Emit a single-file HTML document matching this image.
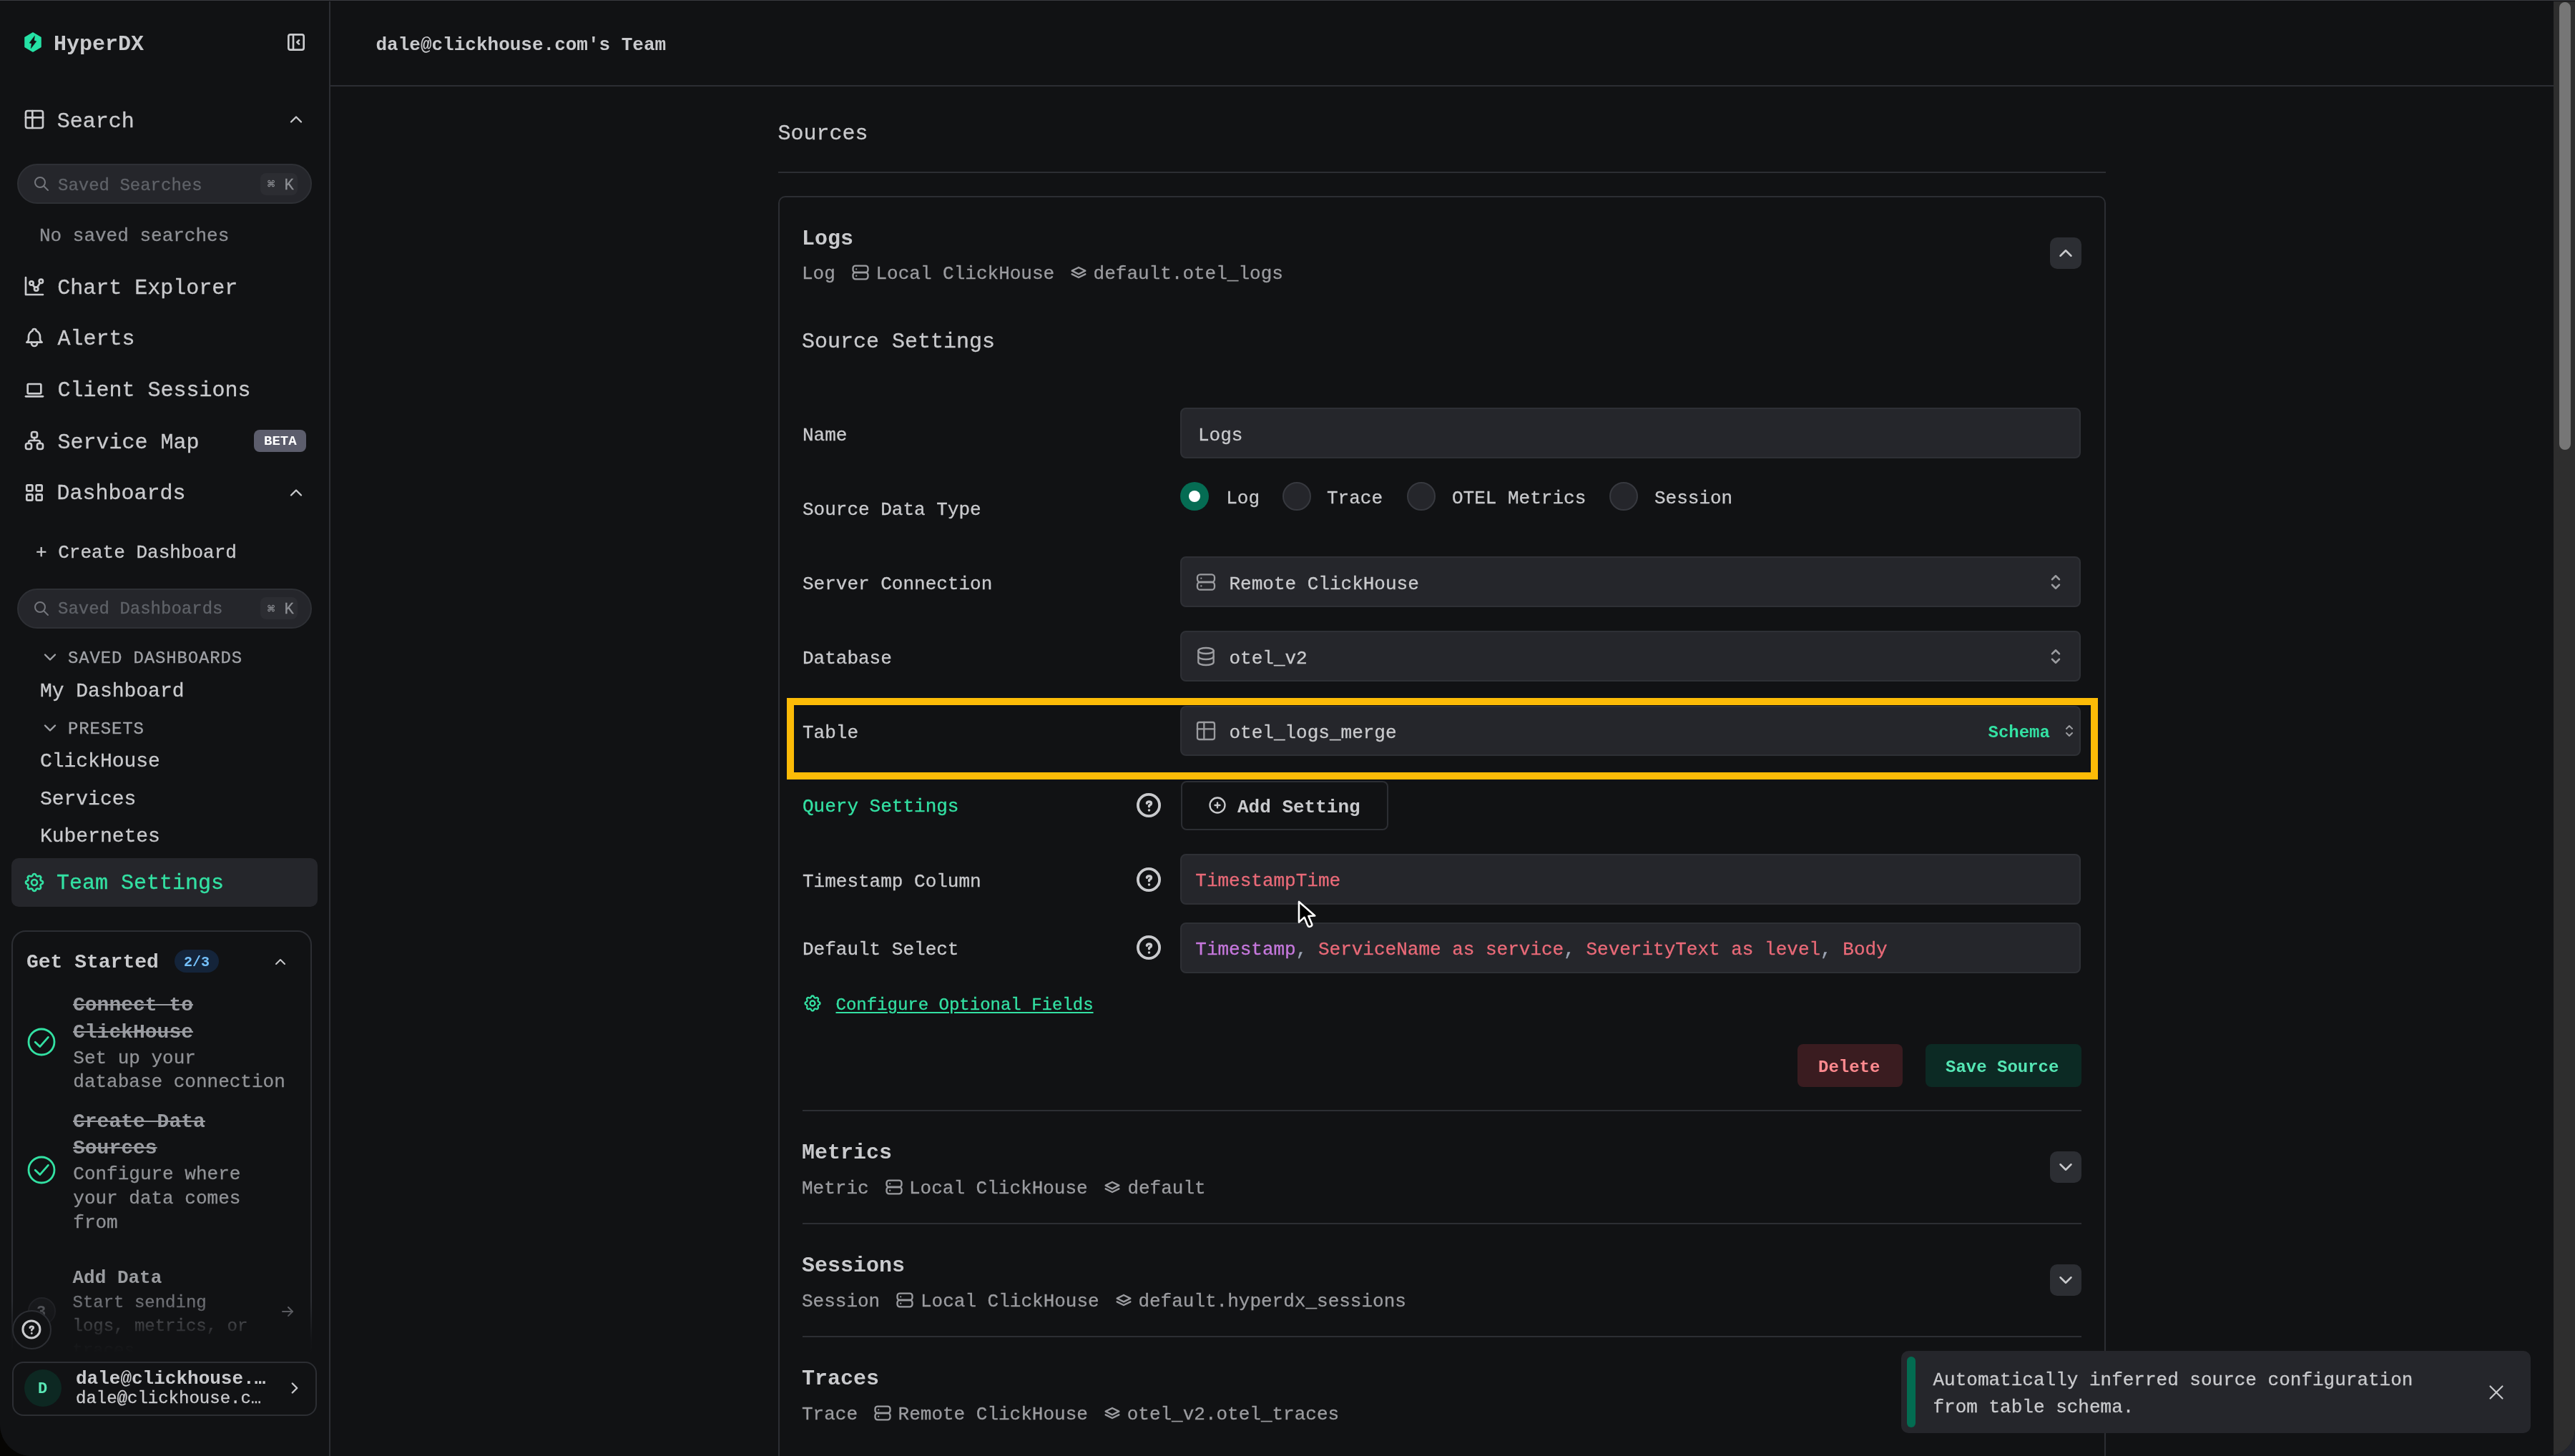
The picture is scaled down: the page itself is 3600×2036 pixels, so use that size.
<!DOCTYPE html><html><head><meta charset="utf-8"><style>
html,body{margin:0;padding:0;}
body{width:3600px;height:2036px;overflow:hidden;background:linear-gradient(to right,#060503 0%,#0a0a0a 50%,#23262f 100%);position:relative;font-family:"Liberation Mono",monospace;}
#w{position:absolute;left:0;top:0;width:3600px;height:2036px;will-change:transform;background:#111214;border-radius:0 0 38px 44px;overflow:hidden;}
.t{position:absolute;white-space:pre;line-height:1;-webkit-font-smoothing:antialiased;}
.r{position:absolute;box-sizing:border-box;}
.i{position:absolute;fill:none;stroke:currentColor;stroke-linecap:round;stroke-linejoin:round;}
</style></head><body><div id="w">
<div class="r" style="left:0.0px;top:0.0px;width:3600.0px;height:1.0px;background:#3a3b40"></div>
<div class="r" style="left:460.0px;top:2.0px;width:2.0px;height:2034.0px;background:#2c2e33"></div>
<div class="r" style="left:462.0px;top:119.0px;width:3108.0px;height:2.0px;background:#2c2e33"></div>
<div class="r" style="left:3570.0px;top:2.0px;width:30.0px;height:2034.0px;background:#2e2e2e"></div>
<div class="r" style="left:3578.0px;top:3.0px;width:16.0px;height:626.0px;background:#767676;border-radius:8px"></div>
<svg class="r" style="left:34px;top:45px;width:24px;height:28px" viewBox="0 0 24 28"><path d="M12 1 L23 7.5 L23 20.5 L12 27 L1 20.5 L1 7.5 Z" fill="#25e2a5" stroke="#25e2a5" stroke-width="1.5" stroke-linejoin="round"/><path d="M14.6 4.9 L7.0 15.1 L10.1 15.9 L9.1 22.9 L17.0 12.8 L13.8 11.7 Z" fill="#111214" stroke="#111214" stroke-width="0.3" stroke-linejoin="round"/></svg>
<div class="t" style="left:75.0px;top:46.8px;font-size:30px;color:#c9cacd;font-weight:700;">HyperDX</div>
<svg class="i" style="left:398.0px;top:43.0px;width:32px;height:32px;color:#c9cacd" viewBox="0 0 24 24" stroke-width="2"><path d="M4 4m0 2a2 2 0 0 1 2 -2h12a2 2 0 0 1 2 2v12a2 2 0 0 1 -2 2h-12a2 2 0 0 1 -2 -2z"/><path d="M9 4v16"/><path d="M15 10l-2 2l2 2"/></svg>
<svg class="i" style="left:32.0px;top:151.0px;width:32px;height:32px;color:#c9cacd" viewBox="0 0 24 24" stroke-width="2"><path d="M3 5a2 2 0 0 1 2 -2h14a2 2 0 0 1 2 2v14a2 2 0 0 1 -2 2h-14a2 2 0 0 1 -2 -2v-14z"/><path d="M3 10h18"/><path d="M10 3v18"/></svg>
<div class="t" style="left:79.8px;top:154.7px;font-size:30px;color:#c9cacd;-webkit-text-stroke:0.3px currentColor;">Search</div>
<svg class="i" style="left:400.2px;top:153.0px;width:28px;height:28px;color:#c9cacd" viewBox="0 0 24 24" stroke-width="2"><path d="M6 15l6 -6l6 6"/></svg>
<div class="r" style="left:24.0px;top:229.0px;width:412.0px;height:56.0px;background:#25262b;border:2px solid #2e3035;border-radius:28px"></div>
<svg class="i" style="left:46.0px;top:245.0px;width:24px;height:24px;color:#74767c" viewBox="0 0 24 24" stroke-width="2"><path d="M10 10m-7 0a7 7 0 1 0 14 0a7 7 0 1 0 -14 0"/><path d="M21 21l-6 -6"/></svg>
<div class="t" style="left:81.0px;top:247.7px;font-size:24px;color:#5f6268;-webkit-text-stroke:0.3px currentColor;">Saved Searches</div>
<div class="r" style="left:364.0px;top:242.0px;width:51.7px;height:31.2px;background:#2c2d32;border-radius:8px"></div>
<div class="t" style="left:374.0px;top:250.0px;font-size:17px;color:#8d8f94;font-weight:700;">⌘</div>
<div class="t" style="left:397.5px;top:248.6px;font-size:22px;color:#8d8f94;-webkit-text-stroke:0.3px currentColor;">K</div>
<div class="t" style="left:55.0px;top:317.1px;font-size:26px;color:#8d8f94;-webkit-text-stroke:0.3px currentColor;">No saved searches</div>
<svg class="i" style="left:32.0px;top:384.0px;width:32px;height:32px;color:#c9cacd" viewBox="0 0 24 24" stroke-width="2"><path d="M3 3v18h18"/><path d="M9 9m-2 0a2 2 0 1 0 4 0a2 2 0 1 0 -4 0"/><path d="M19 7m-2 0a2 2 0 1 0 4 0a2 2 0 1 0 -4 0"/><path d="M14 15m-2 0a2 2 0 1 0 4 0a2 2 0 1 0 -4 0"/><path d="M10.16 10.62l2.34 2.88"/><path d="M15.088 13.328l2.837 -4.586"/></svg>
<div class="t" style="left:80.3px;top:388.1px;font-size:30px;color:#c9cacd;-webkit-text-stroke:0.3px currentColor;">Chart Explorer</div>
<svg class="i" style="left:32.0px;top:456.0px;width:32px;height:32px;color:#c9cacd" viewBox="0 0 24 24" stroke-width="2"><path d="M10 5a2 2 0 1 1 4 0a7 7 0 0 1 4 6v3a4 4 0 0 0 2 3h-16a4 4 0 0 0 2 -3v-3a7 7 0 0 1 4 -6"/><path d="M9 17v1a3 3 0 0 0 6 0v-1"/></svg>
<div class="t" style="left:80.5px;top:458.6px;font-size:30px;color:#c9cacd;-webkit-text-stroke:0.3px currentColor;">Alerts</div>
<svg class="i" style="left:32.0px;top:529.0px;width:32px;height:32px;color:#c9cacd" viewBox="0 0 24 24" stroke-width="2"><path d="M3 19l18 0"/><path d="M5 6m0 1a1 1 0 0 1 1 -1h12a1 1 0 0 1 1 1v8a1 1 0 0 1 -1 1h-12a1 1 0 0 1 -1 -1z"/></svg>
<div class="t" style="left:80.5px;top:531.2px;font-size:30px;color:#c9cacd;-webkit-text-stroke:0.3px currentColor;">Client Sessions</div>
<svg class="i" style="left:32.0px;top:600.0px;width:32px;height:32px;color:#c9cacd" viewBox="0 0 24 24" stroke-width="2"><path d="M3 15m0 2a2 2 0 0 1 2 -2h2a2 2 0 0 1 2 2v2a2 2 0 0 1 -2 2h-2a2 2 0 0 1 -2 -2z"/><path d="M15 15m0 2a2 2 0 0 1 2 -2h2a2 2 0 0 1 2 2v2a2 2 0 0 1 -2 2h-2a2 2 0 0 1 -2 -2z"/><path d="M9 3m0 2a2 2 0 0 1 2 -2h2a2 2 0 0 1 2 2v2a2 2 0 0 1 -2 2h-2a2 2 0 0 1 -2 -2z"/><path d="M6 15v-1a2 2 0 0 1 2 -2h8a2 2 0 0 1 2 2v1"/><path d="M12 9l0 3"/></svg>
<div class="t" style="left:80.5px;top:603.8px;font-size:30px;color:#c9cacd;-webkit-text-stroke:0.3px currentColor;">Service Map</div>
<div class="r" style="left:355.0px;top:600.5px;width:73.0px;height:31.5px;background:#5c5d6c;border-radius:8px"></div>
<div class="t" style="left:369.0px;top:608.4px;font-size:19px;color:#ffffff;font-weight:700;">BETA</div>
<svg class="i" style="left:32.0px;top:672.5px;width:32px;height:32px;color:#c9cacd" viewBox="0 0 24 24" stroke-width="2"><path d="M4 4m0 1a1 1 0 0 1 1 -1h4a1 1 0 0 1 1 1v4a1 1 0 0 1 -1 1h-4a1 1 0 0 1 -1 -1z"/><path d="M14 4m0 1a1 1 0 0 1 1 -1h4a1 1 0 0 1 1 1v4a1 1 0 0 1 -1 1h-4a1 1 0 0 1 -1 -1z"/><path d="M4 14m0 1a1 1 0 0 1 1 -1h4a1 1 0 0 1 1 1v4a1 1 0 0 1 -1 1h-4a1 1 0 0 1 -1 -1z"/><path d="M14 14m0 1a1 1 0 0 1 1 -1h4a1 1 0 0 1 1 1v4a1 1 0 0 1 -1 1h-4a1 1 0 0 1 -1 -1z"/></svg>
<div class="t" style="left:79.5px;top:674.9px;font-size:30px;color:#c9cacd;-webkit-text-stroke:0.3px currentColor;">Dashboards</div>
<svg class="i" style="left:400.2px;top:674.8px;width:28px;height:28px;color:#c9cacd" viewBox="0 0 24 24" stroke-width="2"><path d="M6 15l6 -6l6 6"/></svg>
<div class="t" style="left:50.0px;top:760.2px;font-size:26px;color:#c9cacd;-webkit-text-stroke:0.3px currentColor;">+ Create Dashboard</div>
<div class="r" style="left:24.0px;top:822.5px;width:412.0px;height:56.0px;background:#25262b;border:2px solid #2e3035;border-radius:28px"></div>
<svg class="i" style="left:46.0px;top:838.5px;width:24px;height:24px;color:#74767c" viewBox="0 0 24 24" stroke-width="2"><path d="M10 10m-7 0a7 7 0 1 0 14 0a7 7 0 1 0 -14 0"/><path d="M21 21l-6 -6"/></svg>
<div class="t" style="left:81.0px;top:840.3px;font-size:24px;color:#5f6268;-webkit-text-stroke:0.3px currentColor;">Saved Dashboards</div>
<div class="r" style="left:364.0px;top:835.0px;width:51.7px;height:31.0px;background:#2c2d32;border-radius:8px"></div>
<div class="t" style="left:374.0px;top:843.5px;font-size:17px;color:#8d8f94;font-weight:700;">⌘</div>
<div class="t" style="left:397.5px;top:842.1px;font-size:22px;color:#8d8f94;-webkit-text-stroke:0.3px currentColor;">K</div>
<svg class="i" style="left:56.0px;top:905.0px;width:28px;height:28px;color:#a1a3a8" viewBox="0 0 24 24" stroke-width="2"><path d="M6 9l6 6l6 -6"/></svg>
<div class="t" style="left:95.0px;top:908.9px;font-size:24px;color:#a1a3a8;-webkit-text-stroke:0.3px currentColor;letter-spacing:0.85px;">SAVED DASHBOARDS</div>
<div class="t" style="left:55.9px;top:952.8px;font-size:28px;color:#c9cacd;-webkit-text-stroke:0.3px currentColor;">My Dashboard</div>
<svg class="i" style="left:56.0px;top:1003.6px;width:28px;height:28px;color:#a1a3a8" viewBox="0 0 24 24" stroke-width="2"><path d="M6 9l6 6l6 -6"/></svg>
<div class="t" style="left:95.0px;top:1007.8px;font-size:24px;color:#a1a3a8;-webkit-text-stroke:0.3px currentColor;letter-spacing:0.85px;">PRESETS</div>
<div class="t" style="left:55.9px;top:1050.8px;font-size:28px;color:#c9cacd;-webkit-text-stroke:0.3px currentColor;">ClickHouse</div>
<div class="t" style="left:55.9px;top:1103.6px;font-size:28px;color:#c9cacd;-webkit-text-stroke:0.3px currentColor;">Services</div>
<div class="t" style="left:55.9px;top:1155.9px;font-size:28px;color:#c9cacd;-webkit-text-stroke:0.3px currentColor;">Kubernetes</div>
<div class="r" style="left:16.0px;top:1200.0px;width:428.0px;height:68.0px;background:#25262b;border-radius:10px"></div>
<svg class="i" style="left:32.0px;top:1218.0px;width:32px;height:32px;color:#33e1a3" viewBox="0 0 24 24" stroke-width="2"><path d="M10.325 4.317c.426 -1.756 2.924 -1.756 3.35 0a1.724 1.724 0 0 0 2.573 1.066c1.543 -.94 3.31 .826 2.37 2.37a1.724 1.724 0 0 0 1.065 2.572c1.756 .426 1.756 2.924 0 3.35a1.724 1.724 0 0 0 -1.066 2.573c.94 1.543 -.826 3.31 -2.37 2.37a1.724 1.724 0 0 0 -2.572 1.065c-.426 1.756 -2.924 1.756 -3.35 0a1.724 1.724 0 0 0 -2.573 -1.066c-1.543 .94 -3.31 -.826 -2.37 -2.37a1.724 1.724 0 0 0 -1.065 -2.572c-1.756 -.426 -1.756 -2.924 0 -3.35a1.724 1.724 0 0 0 1.066 -2.573c-.94 -1.543 .826 -3.31 2.37 -2.37c1 .608 2.296 .07 2.572 -1.065z"/><path d="M9 12a3 3 0 1 0 6 0a3 3 0 0 0 -6 0"/></svg>
<div class="t" style="left:79.0px;top:1220.2px;font-size:30px;color:#33e1a3;-webkit-text-stroke:0.3px currentColor;">Team Settings</div>
<div class="r" style="left:0;top:1290px;width:460px;height:600px;overflow:hidden;">
<div class="r" style="left:16.3px;top:10.5px;width:419.7px;height:789.5px;border:2px solid #2c2e33;border-radius:20px"></div>
</div>
<div class="t" style="left:37.0px;top:1331.9px;font-size:28px;color:#c9cacd;font-weight:700;">Get Started</div>
<div class="r" style="left:244.0px;top:1328.0px;width:61.5px;height:31.5px;background:#14243a;border-radius:16px"></div>
<div class="t" style="left:257.0px;top:1336.2px;font-size:20px;color:#74c0fc;font-weight:700;">2/3</div>
<svg class="i" style="left:380.0px;top:1332.6px;width:24px;height:24px;color:#c9cacd" viewBox="0 0 24 24" stroke-width="2"><path d="M6 15l6 -6l6 6"/></svg>
<svg class="i" style="left:34.0px;top:1433.0px;width:48px;height:48px;color:#33e1a3" viewBox="0 0 24 24" stroke-width="1.4"><path d="M12 12m-9 0a9 9 0 1 0 18 0a9 9 0 1 0 -18 0"/><path d="M7.6 12.1l3.3 3.2l5.8 -6.6"/></svg>
<div class="t" style="left:102.0px;top:1392.4px;font-size:28px;color:#9a9ca1;font-weight:700;text-decoration:line-through;">Connect to</div>
<div class="t" style="left:102.0px;top:1430.1px;font-size:28px;color:#9a9ca1;font-weight:700;text-decoration:line-through;">ClickHouse</div>
<div class="t" style="left:102.3px;top:1467.4px;font-size:26px;color:#909296;-webkit-text-stroke:0.3px currentColor;">Set up your</div>
<div class="t" style="left:102.3px;top:1500.0px;font-size:26px;color:#909296;-webkit-text-stroke:0.3px currentColor;">database connection</div>
<svg class="i" style="left:34.0px;top:1612.0px;width:48px;height:48px;color:#33e1a3" viewBox="0 0 24 24" stroke-width="1.4"><path d="M12 12m-9 0a9 9 0 1 0 18 0a9 9 0 1 0 -18 0"/><path d="M7.6 12.1l3.3 3.2l5.8 -6.6"/></svg>
<div class="t" style="left:102.0px;top:1555.3px;font-size:28px;color:#9a9ca1;font-weight:700;text-decoration:line-through;">Create Data</div>
<div class="t" style="left:102.0px;top:1592.4px;font-size:28px;color:#9a9ca1;font-weight:700;text-decoration:line-through;">Sources</div>
<div class="t" style="left:102.3px;top:1628.7px;font-size:26px;color:#909296;-webkit-text-stroke:0.3px currentColor;">Configure where</div>
<div class="t" style="left:102.3px;top:1662.7px;font-size:26px;color:#909296;-webkit-text-stroke:0.3px currentColor;">your data comes</div>
<div class="t" style="left:102.3px;top:1696.7px;font-size:26px;color:#909296;-webkit-text-stroke:0.3px currentColor;">from</div>
<div class="r" style="left:39.0px;top:1814.0px;width:38.5px;height:38.5px;background:#18191c;border:2px solid #222327;border-radius:50%"></div>
<div class="t" style="left:51.0px;top:1825.1px;font-size:22px;color:#5c5e63;font-weight:700;">3</div>
<div class="t" style="left:101.5px;top:1773.6px;font-size:26px;color:#9a9ca0;font-weight:700;">Add Data</div>
<div class="t" style="left:101.5px;top:1809.6px;font-size:24px;color:#707277;-webkit-text-stroke:0.3px currentColor;">Start sending</div>
<div class="t" style="left:101.5px;top:1843.1px;font-size:24px;color:#707277;-webkit-text-stroke:0.3px currentColor;">logs, metrics, or</div>
<div class="t" style="left:101.5px;top:1876.6px;font-size:24px;color:#707277;-webkit-text-stroke:0.3px currentColor;">traces</div>
<svg class="i" style="left:390.0px;top:1822.0px;width:24px;height:24px;color:#6f7176" viewBox="0 0 24 24" stroke-width="2"><path d="M5 12l14 0"/><path d="M13 18l6 -6"/><path d="M13 6l6 6"/></svg>
<div class="r" style="left:0.0px;top:1820.0px;width:460.0px;height:72.0px;background:linear-gradient(to bottom, rgba(17,18,20,0) 0%, rgba(17,18,20,0.9) 75%, #111214 100%)"></div>
<div class="r" style="left:0.0px;top:1892.0px;width:460.0px;height:144.0px;background:#111214"></div>
<div class="r" style="left:16.5px;top:1831.5px;width:55.0px;height:55.0px;background:#111214;border:2px solid #2c2e33;border-radius:50%"></div>
<svg class="r" style="left:27.9px;top:1843.2px;width:31.8px;height:31.8px" viewBox="0 0 40 40"><circle cx="20" cy="20" r="15.1" fill="none" stroke="#c9cacd" stroke-width="3.8"/><path d="M17.4 17.2 C17.4 15.8 18.6 15.0 20.5 15.0 C22.4 15.0 23.5 16.0 23.5 17.4 C23.5 18.9 22.1 19.4 21.1 20.0 C20.6 20.3 20.5 20.8 20.5 21.8" fill="none" stroke="#c9cacd" stroke-width="3.4" stroke-linecap="round" stroke-linejoin="round"/><circle cx="20.5" cy="26.9" r="1.75" fill="#c9cacd"/></svg>
<div class="r" style="left:16.5px;top:1903.5px;width:426.5px;height:76.0px;border:2px solid #2c2e33;border-radius:16px"></div>
<div class="r" style="left:34.0px;top:1915.0px;width:52.0px;height:52.0px;background:#0d2822;border-radius:50%"></div>
<div class="t" style="left:53.0px;top:1931.9px;font-size:22px;color:#5ae8b6;font-weight:700;">D</div>
<div class="t" style="left:106.0px;top:1915.0px;font-size:26px;color:#c9cacd;font-weight:700;">dale@clickhouse.…</div>
<div class="t" style="left:106.0px;top:1943.7px;font-size:24px;color:#c9cacd;-webkit-text-stroke:0.3px currentColor;">dale@clickhouse.c…</div>
<svg class="i" style="left:398.8px;top:1928.4px;width:26px;height:26px;color:#c9cacd" viewBox="0 0 24 24" stroke-width="2.2"><path d="M9 6l6 6l-6 6"/></svg>
<div class="t" style="left:525.5px;top:50.1px;font-size:26px;color:#c9cacd;font-weight:700;">dale@clickhouse.com's Team</div>
<div class="t" style="left:1087.5px;top:172.1px;font-size:30px;color:#c9cacd;-webkit-text-stroke:0.3px currentColor;">Sources</div>
<div class="r" style="left:1088.0px;top:240.0px;width:1856.0px;height:2.0px;background:#2c2e33"></div>
<div class="r" style="left:1088.0px;top:274.0px;width:1856.0px;height:1826.0px;border:2px solid #2c2e33;border-radius:10px"></div>
<div class="t" style="left:1121.0px;top:319.0px;font-size:30px;color:#c9cacd;font-weight:700;">Logs</div>
<div class="r" style="left:2866.0px;top:332.0px;width:44.0px;height:44.0px;background:#2c2e33;border-radius:10px"></div>
<svg class="i" style="left:2873.0px;top:339.0px;width:30px;height:30px;color:#c9cacd" viewBox="0 0 24 24" stroke-width="2"><path d="M6 15l6 -6l6 6"/></svg>
<div class="t" style="left:1121.0px;top:369.9px;font-size:26px;color:#9b9ca0;-webkit-text-stroke:0.3px currentColor;">Log</div>
<svg class="i" style="left:1189.0px;top:366.8px;width:28px;height:28px;color:#9b9ca0" viewBox="0 0 24 24" stroke-width="2"><path d="M3 4m0 3a3 3 0 0 1 3 -3h12a3 3 0 0 1 3 3v2a3 3 0 0 1 -3 3h-12a3 3 0 0 1 -3 -3z"/><path d="M3 12m0 3a3 3 0 0 1 3 -3h12a3 3 0 0 1 3 3v2a3 3 0 0 1 -3 3h-12a3 3 0 0 1 -3 -3z"/><path d="M7 8l0 .01"/><path d="M7 16l0 .01"/></svg>
<div class="t" style="left:1224.5px;top:369.9px;font-size:26px;color:#9b9ca0;-webkit-text-stroke:0.3px currentColor;">Local ClickHouse</div>
<svg class="i" style="left:1494.0px;top:366.8px;width:28px;height:28px;color:#9b9ca0" viewBox="0 0 24 24" stroke-width="2"><path d="M12 6l-8 4l8 4l8 -4l-8 -4"/><path d="M4 14l8 4l8 -4"/></svg>
<div class="t" style="left:1528.6px;top:369.9px;font-size:26px;color:#9b9ca0;-webkit-text-stroke:0.3px currentColor;">default.otel_logs</div>
<div class="t" style="left:1121.0px;top:463.3px;font-size:30px;color:#c9cacd;-webkit-text-stroke:0.3px currentColor;">Source Settings</div>
<div class="t" style="left:1122.0px;top:596.0px;font-size:26px;color:#c9cacd;-webkit-text-stroke:0.3px currentColor;">Name</div>
<div class="r" style="left:1649.7px;top:569.8px;width:1259.8px;height:71.7px;background:#25262b;border:2px solid #2e3035;border-radius:8px"></div>
<div class="t" style="left:1675.0px;top:595.5px;font-size:26px;color:#c9cacd;-webkit-text-stroke:0.3px currentColor;">Logs</div>
<div class="t" style="left:1122.0px;top:699.6px;font-size:26px;color:#c9cacd;-webkit-text-stroke:0.3px currentColor;">Source Data Type</div>
<div class="r" style="left:1649.8px;top:673.7px;width:40.2px;height:40.2px;background:#056c53;border-radius:50%"></div>
<div class="r" style="left:1661.9px;top:685.8px;width:16.0px;height:16.0px;background:#ffffff;border-radius:50%"></div>
<div class="t" style="left:1714.2px;top:684.4px;font-size:26px;color:#c9cacd;-webkit-text-stroke:0.3px currentColor;">Log</div>
<div class="r" style="left:1793.0px;top:673.8px;width:40.0px;height:40.0px;background:#25262b;border:2px solid #37393f;border-radius:50%"></div>
<div class="r" style="left:1967.0px;top:673.8px;width:40.0px;height:40.0px;background:#25262b;border:2px solid #37393f;border-radius:50%"></div>
<div class="r" style="left:2249.7px;top:673.8px;width:40.0px;height:40.0px;background:#25262b;border:2px solid #37393f;border-radius:50%"></div>
<div class="t" style="left:1855.0px;top:684.4px;font-size:26px;color:#c9cacd;-webkit-text-stroke:0.3px currentColor;">Trace</div>
<div class="t" style="left:2030.0px;top:684.4px;font-size:26px;color:#c9cacd;-webkit-text-stroke:0.3px currentColor;">OTEL Metrics</div>
<div class="t" style="left:2313.0px;top:684.4px;font-size:26px;color:#c9cacd;-webkit-text-stroke:0.3px currentColor;">Session</div>
<div class="t" style="left:1122.0px;top:803.9px;font-size:26px;color:#c9cacd;-webkit-text-stroke:0.3px currentColor;">Server Connection</div>
<div class="r" style="left:1649.7px;top:777.8px;width:1259.8px;height:71.7px;background:#25262b;border:2px solid #2e3035;border-radius:8px"></div>
<svg class="i" style="left:1670.0px;top:798.0px;width:32px;height:32px;color:#9b9ca0" viewBox="0 0 24 24" stroke-width="1.75"><path d="M3 4m0 3a3 3 0 0 1 3 -3h12a3 3 0 0 1 3 3v2a3 3 0 0 1 -3 3h-12a3 3 0 0 1 -3 -3z"/><path d="M3 12m0 3a3 3 0 0 1 3 -3h12a3 3 0 0 1 3 3v2a3 3 0 0 1 -3 3h-12a3 3 0 0 1 -3 -3z"/><path d="M7 8l0 .01"/><path d="M7 16l0 .01"/></svg>
<div class="t" style="left:1718.5px;top:804.0px;font-size:26px;color:#c9cacd;-webkit-text-stroke:0.3px currentColor;">Remote ClickHouse</div>
<svg class="i" style="left:2859.0px;top:799.0px;width:30px;height:30px;color:#9b9ca0" viewBox="0 0 24 24" stroke-width="2"><path d="M8 9l4 -4l4 4"/><path d="M16 15l-4 4l-4 -4"/></svg>
<div class="t" style="left:1122.0px;top:907.9px;font-size:26px;color:#c9cacd;-webkit-text-stroke:0.3px currentColor;">Database</div>
<div class="r" style="left:1649.7px;top:881.8px;width:1259.8px;height:71.7px;background:#25262b;border:2px solid #2e3035;border-radius:8px"></div>
<svg class="i" style="left:1670.0px;top:902.0px;width:32px;height:32px;color:#9b9ca0" viewBox="0 0 24 24" stroke-width="1.75"><path d="M12 6m-8 0a8 3 0 1 0 16 0a8 3 0 1 0 -16 0"/><path d="M4 6v6a8 3 0 0 0 16 0v-6"/><path d="M4 12v6a8 3 0 0 0 16 0v-6"/></svg>
<div class="t" style="left:1718.5px;top:908.0px;font-size:26px;color:#c9cacd;-webkit-text-stroke:0.3px currentColor;">otel_v2</div>
<svg class="i" style="left:2859.0px;top:903.0px;width:30px;height:30px;color:#9b9ca0" viewBox="0 0 24 24" stroke-width="2"><path d="M8 9l4 -4l4 4"/><path d="M16 15l-4 4l-4 -4"/></svg>
<div class="r" style="left:1099.5px;top:976.0px;width:1833.0px;height:113.5px;border:10.5px solid #fcbb07"></div>
<div class="t" style="left:1122.0px;top:1011.7px;font-size:26px;color:#c9cacd;-webkit-text-stroke:0.3px currentColor;">Table</div>
<div class="r" style="left:1649.7px;top:987.3px;width:1259.8px;height:70.2px;background:#25262b;border:2px solid #2e3035;border-radius:8px"></div>
<svg class="i" style="left:1670.0px;top:1006.0px;width:32px;height:32px;color:#9b9ca0" viewBox="0 0 24 24" stroke-width="1.75"><path d="M3 5a2 2 0 0 1 2 -2h14a2 2 0 0 1 2 2v14a2 2 0 0 1 -2 2h-14a2 2 0 0 1 -2 -2v-14z"/><path d="M3 10h18"/><path d="M10 3v18"/></svg>
<div class="t" style="left:1718.5px;top:1011.8px;font-size:26px;color:#c9cacd;-webkit-text-stroke:0.3px currentColor;">otel_logs_merge</div>
<div class="t" style="left:2779.5px;top:1012.7px;font-size:24px;color:#33e1a3;font-weight:700;">Schema</div>
<svg class="i" style="left:2881.0px;top:1010.0px;width:24px;height:24px;color:#9b9ca0" viewBox="0 0 24 24" stroke-width="2"><path d="M8 9l4 -4l4 4"/><path d="M16 15l-4 4l-4 -4"/></svg>
<div class="t" style="left:1122.0px;top:1115.0px;font-size:26px;color:#33e1a3;-webkit-text-stroke:0.3px currentColor;">Query Settings</div>
<svg class="r" style="left:1585.9px;top:1105.9px;width:40.0px;height:40.0px" viewBox="0 0 40 40"><circle cx="20" cy="20" r="15.1" fill="none" stroke="#c9cacd" stroke-width="3.8"/><path d="M17.4 17.2 C17.4 15.8 18.6 15.0 20.5 15.0 C22.4 15.0 23.5 16.0 23.5 17.4 C23.5 18.9 22.1 19.4 21.1 20.0 C20.6 20.3 20.5 20.8 20.5 21.8" fill="none" stroke="#c9cacd" stroke-width="3.4" stroke-linecap="round" stroke-linejoin="round"/><circle cx="20.5" cy="26.9" r="1.75" fill="#c9cacd"/></svg>
<div class="r" style="left:1650.5px;top:1091.5px;width:290.5px;height:69.5px;border:2px solid #2c2e33;border-radius:8px"></div>
<svg class="i" style="left:1687.7px;top:1112.0px;width:28px;height:28px;color:#c9cacd" viewBox="0 0 24 24" stroke-width="2"><path d="M3 12a9 9 0 1 0 18 0a9 9 0 0 0 -18 0"/><path d="M9 12h6"/><path d="M12 9v6"/></svg>
<div class="t" style="left:1730.0px;top:1115.9px;font-size:26px;color:#c9cacd;font-weight:700;">Add Setting</div>
<div class="t" style="left:1122.0px;top:1219.7px;font-size:26px;color:#c9cacd;-webkit-text-stroke:0.3px currentColor;">Timestamp Column</div>
<svg class="r" style="left:1585.9px;top:1210.0px;width:40.0px;height:40.0px" viewBox="0 0 40 40"><circle cx="20" cy="20" r="15.1" fill="none" stroke="#c9cacd" stroke-width="3.8"/><path d="M17.4 17.2 C17.4 15.8 18.6 15.0 20.5 15.0 C22.4 15.0 23.5 16.0 23.5 17.4 C23.5 18.9 22.1 19.4 21.1 20.0 C20.6 20.3 20.5 20.8 20.5 21.8" fill="none" stroke="#c9cacd" stroke-width="3.4" stroke-linecap="round" stroke-linejoin="round"/><circle cx="20.5" cy="26.9" r="1.75" fill="#c9cacd"/></svg>
<div class="r" style="left:1649.7px;top:1194.3px;width:1259.8px;height:71.2px;background:#25262b;border:2px solid #2e3035;border-radius:8px"></div>
<div class="t" style="left:1671.3px;top:1219.0px;font-size:26px;color:#e96a78;-webkit-text-stroke:0.3px currentColor;">TimestampTime</div>
<div class="t" style="left:1122.0px;top:1315.0px;font-size:26px;color:#c9cacd;-webkit-text-stroke:0.3px currentColor;">Default Select</div>
<svg class="r" style="left:1585.9px;top:1305.0px;width:40.0px;height:40.0px" viewBox="0 0 40 40"><circle cx="20" cy="20" r="15.1" fill="none" stroke="#c9cacd" stroke-width="3.8"/><path d="M17.4 17.2 C17.4 15.8 18.6 15.0 20.5 15.0 C22.4 15.0 23.5 16.0 23.5 17.4 C23.5 18.9 22.1 19.4 21.1 20.0 C20.6 20.3 20.5 20.8 20.5 21.8" fill="none" stroke="#c9cacd" stroke-width="3.4" stroke-linecap="round" stroke-linejoin="round"/><circle cx="20.5" cy="26.9" r="1.75" fill="#c9cacd"/></svg>
<div class="r" style="left:1649.7px;top:1289.8px;width:1259.8px;height:71.2px;background:#25262b;border:2px solid #2e3035;border-radius:8px"></div>
<div class="t" style="left:1671.3px;top:1315.2px;font-size:26px;color:#e96a78;-webkit-text-stroke:0.3px currentColor;"><span style="color:#c678dd">Timestamp</span><span style="color:#9da5b4">, </span><span style="color:#e96a78">ServiceName as service</span><span style="color:#9da5b4">, </span><span style="color:#e96a78">SeverityText as level</span><span style="color:#9da5b4">, </span><span style="color:#e96a78">Body</span></div>
<svg class="i" style="left:1121.5px;top:1389.0px;width:28px;height:28px;color:#33e1a3" viewBox="0 0 24 24" stroke-width="2"><path d="M10.325 4.317c.426 -1.756 2.924 -1.756 3.35 0a1.724 1.724 0 0 0 2.573 1.066c1.543 -.94 3.31 .826 2.37 2.37a1.724 1.724 0 0 0 1.065 2.572c1.756 .426 1.756 2.924 0 3.35a1.724 1.724 0 0 0 -1.066 2.573c.94 1.543 -.826 3.31 -2.37 2.37a1.724 1.724 0 0 0 -2.572 1.065c-.426 1.756 -2.924 1.756 -3.35 0a1.724 1.724 0 0 0 -2.573 -1.066c-1.543 .94 -3.31 -.826 -2.37 -2.37a1.724 1.724 0 0 0 -1.065 -2.572c-1.756 -.426 -1.756 -2.924 0 -3.35a1.724 1.724 0 0 0 1.066 -2.573c-.94 -1.543 .826 -3.31 2.37 -2.37c1 .608 2.296 .07 2.572 -1.065z"/><path d="M9 12a3 3 0 1 0 6 0a3 3 0 0 0 -6 0"/></svg>
<div class="t" style="left:1168.5px;top:1393.6px;font-size:24px;color:#33e1a3;-webkit-text-stroke:0.3px currentColor;text-decoration:underline;text-underline-offset:3px;">Configure Optional Fields</div>
<div class="r" style="left:2513.0px;top:1460.0px;width:147.0px;height:60.0px;background:#3a1c20;border-radius:8px"></div>
<div class="t" style="left:2542.0px;top:1481.0px;font-size:24px;color:#ff8a8f;font-weight:700;">Delete</div>
<div class="r" style="left:2692.0px;top:1460.0px;width:218.0px;height:60.0px;background:#0c2a24;border-radius:8px"></div>
<div class="t" style="left:2720.0px;top:1481.0px;font-size:24px;color:#55e6b4;font-weight:700;">Save Source</div>
<div class="r" style="left:1122.0px;top:1552.0px;width:1788.0px;height:2.0px;background:#2c2e33"></div>
<div class="r" style="left:1122.0px;top:1710.0px;width:1788.0px;height:2.0px;background:#2c2e33"></div>
<div class="r" style="left:1122.0px;top:1868.0px;width:1788.0px;height:2.0px;background:#2c2e33"></div>
<div class="t" style="left:1121.0px;top:1597.4px;font-size:30px;color:#c9cacd;font-weight:700;">Metrics</div>
<div class="r" style="left:2866.0px;top:1610.0px;width:44.0px;height:44.0px;background:#2c2e33;border-radius:10px"></div>
<svg class="i" style="left:2873.0px;top:1617.0px;width:30px;height:30px;color:#c9cacd" viewBox="0 0 24 24" stroke-width="2"><path d="M6 9l6 6l6 -6"/></svg>
<div class="t" style="left:1121.0px;top:1648.7px;font-size:26px;color:#9b9ca0;-webkit-text-stroke:0.3px currentColor;">Metric</div>
<svg class="i" style="left:1236.0px;top:1645.6px;width:28px;height:28px;color:#9b9ca0" viewBox="0 0 24 24" stroke-width="2"><path d="M3 4m0 3a3 3 0 0 1 3 -3h12a3 3 0 0 1 3 3v2a3 3 0 0 1 -3 3h-12a3 3 0 0 1 -3 -3z"/><path d="M3 12m0 3a3 3 0 0 1 3 -3h12a3 3 0 0 1 3 3v2a3 3 0 0 1 -3 3h-12a3 3 0 0 1 -3 -3z"/><path d="M7 8l0 .01"/><path d="M7 16l0 .01"/></svg>
<div class="t" style="left:1271.0px;top:1648.7px;font-size:26px;color:#9b9ca0;-webkit-text-stroke:0.3px currentColor;">Local ClickHouse</div>
<svg class="i" style="left:1541.0px;top:1645.6px;width:28px;height:28px;color:#9b9ca0" viewBox="0 0 24 24" stroke-width="2"><path d="M12 6l-8 4l8 4l8 -4l-8 -4"/><path d="M4 14l8 4l8 -4"/></svg>
<div class="t" style="left:1576.4px;top:1648.7px;font-size:26px;color:#9b9ca0;-webkit-text-stroke:0.3px currentColor;">default</div>
<div class="t" style="left:1121.0px;top:1754.6px;font-size:30px;color:#c9cacd;font-weight:700;">Sessions</div>
<div class="r" style="left:2866.0px;top:1768.0px;width:44.0px;height:44.0px;background:#2c2e33;border-radius:10px"></div>
<svg class="i" style="left:2873.0px;top:1775.0px;width:30px;height:30px;color:#c9cacd" viewBox="0 0 24 24" stroke-width="2"><path d="M6 9l6 6l6 -6"/></svg>
<div class="t" style="left:1121.0px;top:1807.0px;font-size:26px;color:#9b9ca0;-webkit-text-stroke:0.3px currentColor;">Session</div>
<svg class="i" style="left:1251.0px;top:1803.9px;width:28px;height:28px;color:#9b9ca0" viewBox="0 0 24 24" stroke-width="2"><path d="M3 4m0 3a3 3 0 0 1 3 -3h12a3 3 0 0 1 3 3v2a3 3 0 0 1 -3 3h-12a3 3 0 0 1 -3 -3z"/><path d="M3 12m0 3a3 3 0 0 1 3 -3h12a3 3 0 0 1 3 3v2a3 3 0 0 1 -3 3h-12a3 3 0 0 1 -3 -3z"/><path d="M7 8l0 .01"/><path d="M7 16l0 .01"/></svg>
<div class="t" style="left:1287.0px;top:1807.0px;font-size:26px;color:#9b9ca0;-webkit-text-stroke:0.3px currentColor;">Local ClickHouse</div>
<svg class="i" style="left:1557.0px;top:1803.9px;width:28px;height:28px;color:#9b9ca0" viewBox="0 0 24 24" stroke-width="2"><path d="M12 6l-8 4l8 4l8 -4l-8 -4"/><path d="M4 14l8 4l8 -4"/></svg>
<div class="t" style="left:1591.4px;top:1807.0px;font-size:26px;color:#9b9ca0;-webkit-text-stroke:0.3px currentColor;">default.hyperdx_sessions</div>
<div class="t" style="left:1121.0px;top:1912.9px;font-size:30px;color:#c9cacd;font-weight:700;">Traces</div>
<div class="r" style="left:2866.0px;top:1926.0px;width:44.0px;height:44.0px;background:#2c2e33;border-radius:10px"></div>
<svg class="i" style="left:2873.0px;top:1933.0px;width:30px;height:30px;color:#c9cacd" viewBox="0 0 24 24" stroke-width="2"><path d="M6 9l6 6l6 -6"/></svg>
<div class="t" style="left:1121.0px;top:1964.9px;font-size:26px;color:#9b9ca0;-webkit-text-stroke:0.3px currentColor;">Trace</div>
<svg class="i" style="left:1220.0px;top:1961.8px;width:28px;height:28px;color:#9b9ca0" viewBox="0 0 24 24" stroke-width="2"><path d="M3 4m0 3a3 3 0 0 1 3 -3h12a3 3 0 0 1 3 3v2a3 3 0 0 1 -3 3h-12a3 3 0 0 1 -3 -3z"/><path d="M3 12m0 3a3 3 0 0 1 3 -3h12a3 3 0 0 1 3 3v2a3 3 0 0 1 -3 3h-12a3 3 0 0 1 -3 -3z"/><path d="M7 8l0 .01"/><path d="M7 16l0 .01"/></svg>
<div class="t" style="left:1255.6px;top:1964.9px;font-size:26px;color:#9b9ca0;-webkit-text-stroke:0.3px currentColor;">Remote ClickHouse</div>
<svg class="i" style="left:1541.0px;top:1961.8px;width:28px;height:28px;color:#9b9ca0" viewBox="0 0 24 24" stroke-width="2"><path d="M12 6l-8 4l8 4l8 -4l-8 -4"/><path d="M4 14l8 4l8 -4"/></svg>
<div class="t" style="left:1575.7px;top:1964.9px;font-size:26px;color:#9b9ca0;-webkit-text-stroke:0.3px currentColor;">otel_v2.otel_traces</div>
<div class="r" style="left:2658.0px;top:1889.0px;width:880.0px;height:115.0px;background:#25262b;border-radius:10px"></div>
<div class="r" style="left:2666.0px;top:1897.0px;width:12.0px;height:99.0px;background:#036c51;border-radius:6px"></div>
<div class="t" style="left:2702.5px;top:1917.0px;font-size:26px;color:#c9cacd;-webkit-text-stroke:0.3px currentColor;">Automatically inferred source configuration</div>
<div class="t" style="left:2702.5px;top:1955.0px;font-size:26px;color:#c9cacd;-webkit-text-stroke:0.3px currentColor;">from table schema.</div>
<svg class="i" style="left:3473.0px;top:1930.0px;width:34px;height:34px;color:#c9cacd" viewBox="0 0 24 24" stroke-width="1.5"><path d="M18 6l-12 12"/><path d="M6 6l12 12"/></svg>
<svg class="r" style="left:1813px;top:1257.5px;width:32px;height:42px" viewBox="0 0 16 21"><path d="M1.5 1.5 L1.5 15.8 L5.3 12.4 L7.7 18.2 Q8.3 19.3 9.4 18.8 L10 18.5 Q10.9 18 10.5 17 L8.2 11.5 L12.6 11.2 Z" fill="#000" stroke="#fff" stroke-width="1.3" stroke-linejoin="round"/></svg>
</div></body></html>
